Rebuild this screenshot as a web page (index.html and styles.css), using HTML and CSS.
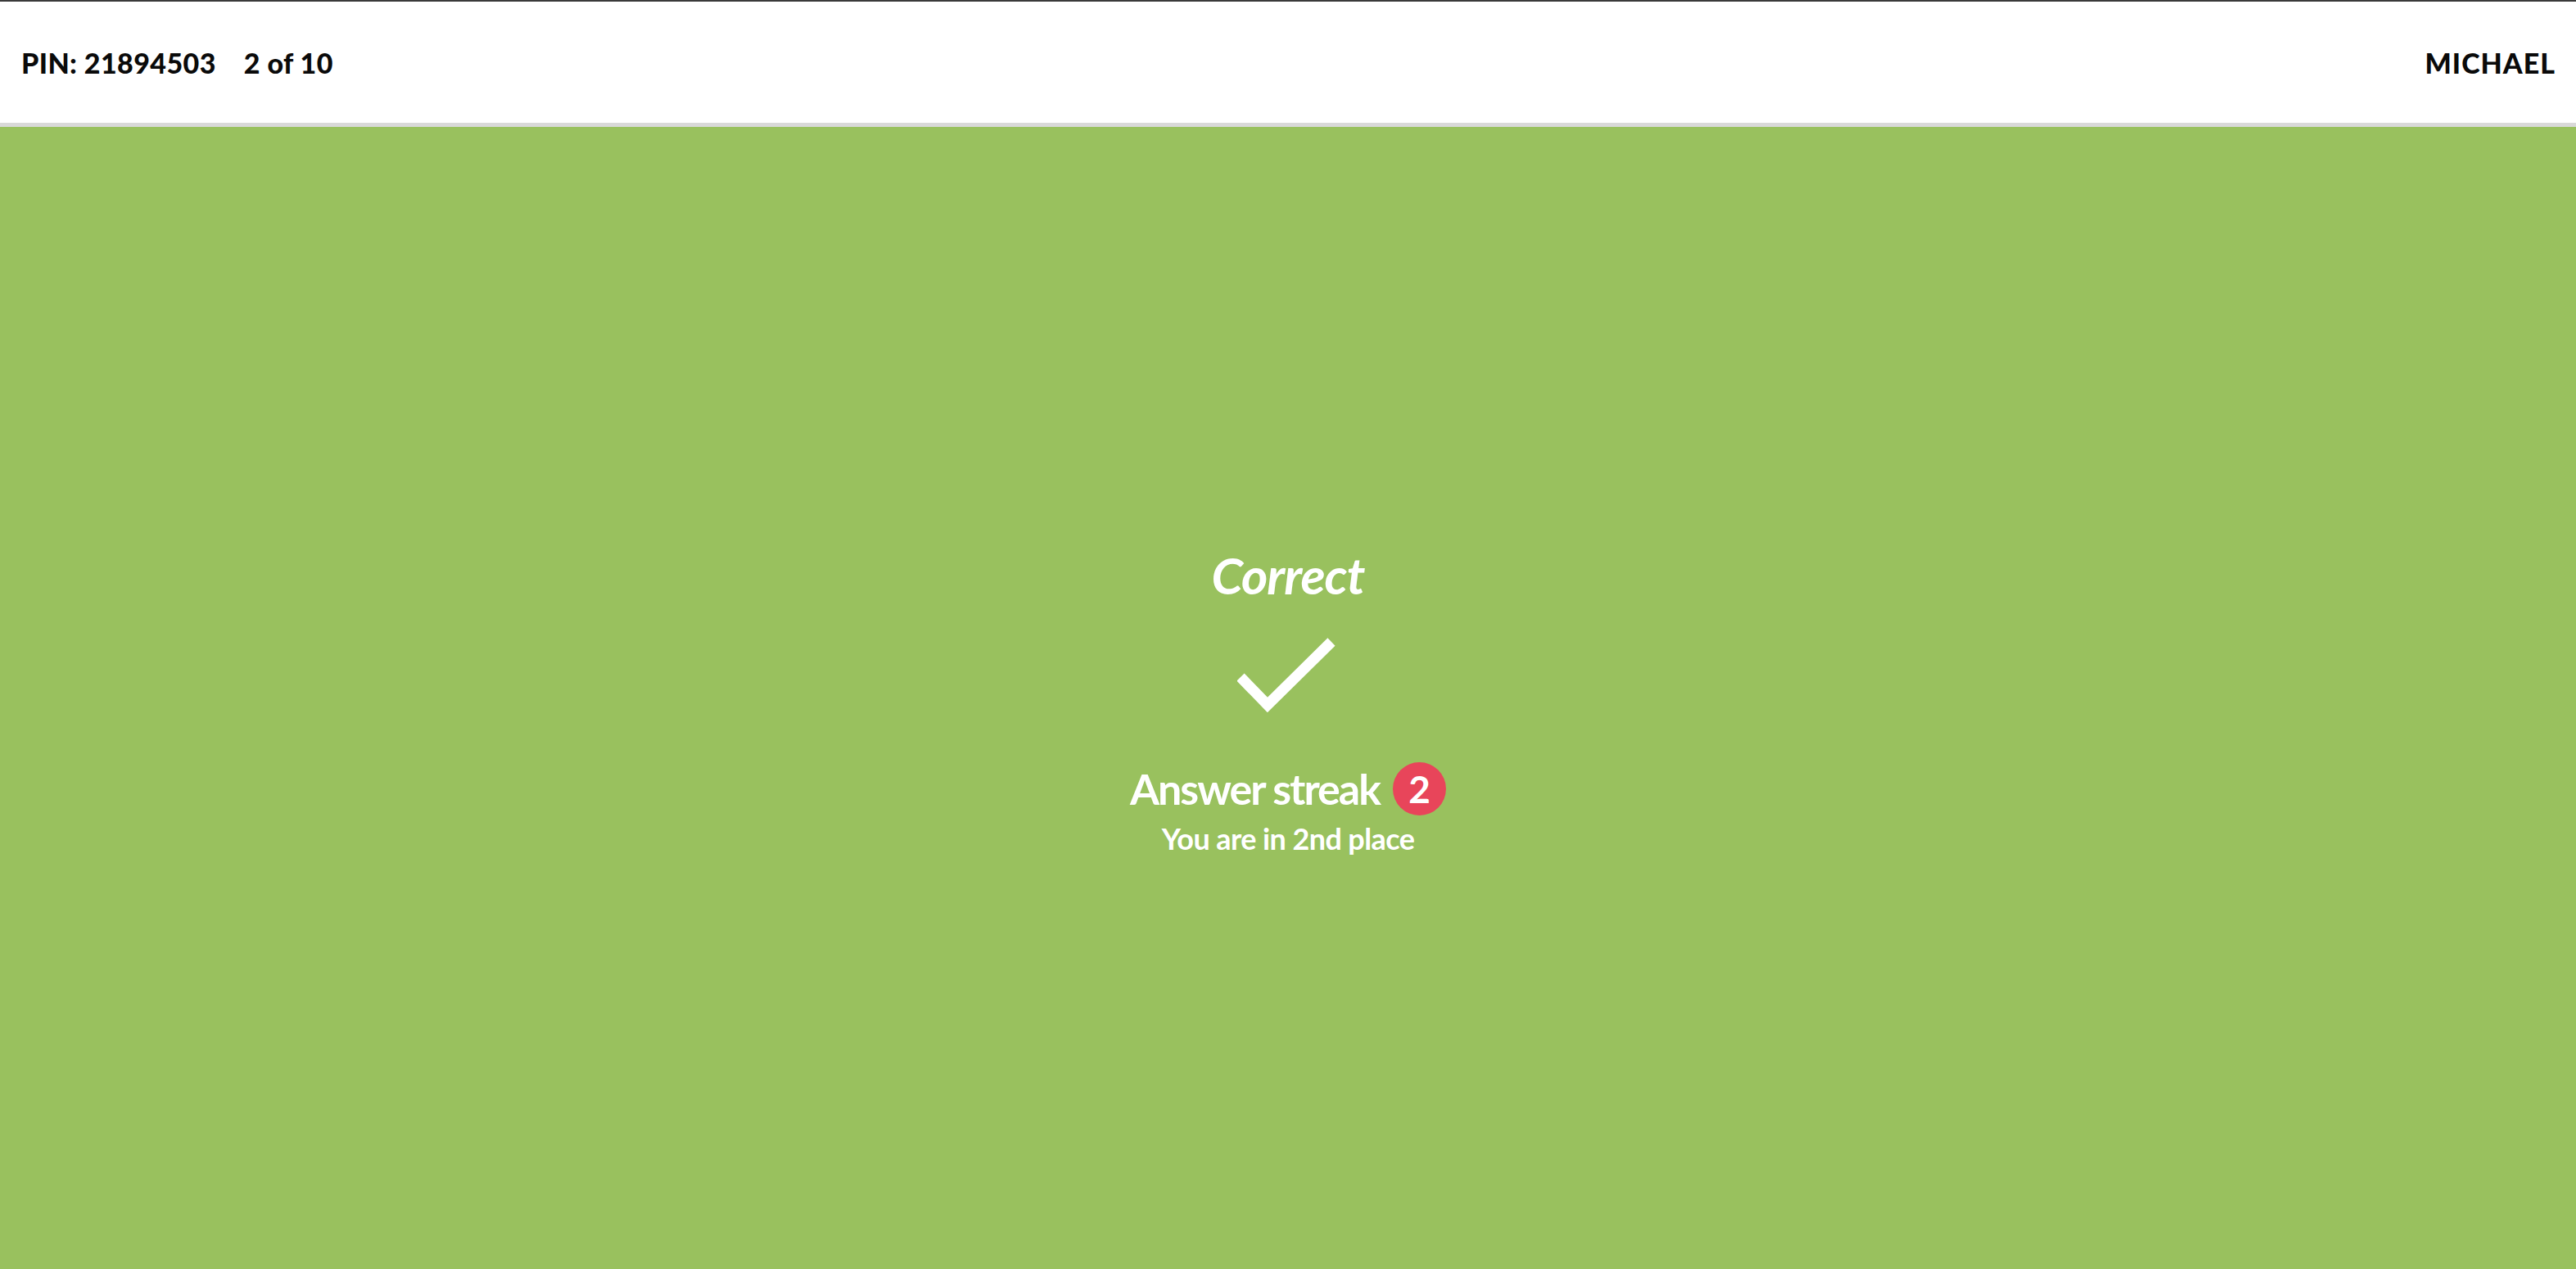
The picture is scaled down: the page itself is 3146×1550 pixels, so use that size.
FILE: index.html
```html
<!DOCTYPE html>
<html lang="en">
<head>
<meta charset="utf-8">
<title>Correct</title>
<link rel="stylesheet" href="styles.css">
</head>
<body>
<div class="page">
  <header class="topbar">
    <div class="topbar-left">
      <span class="pin">PIN: 21894503</span>
      <span class="progress">2 of 10</span>
    </div>
    <div class="player">MICHAEL</div>
  </header>
  <main class="result">
    <div class="result-box">
      <div class="result-title">Correct</div>
      <svg class="check" width="120" height="91" viewBox="0 0 120 91" aria-hidden="true">
        <path d="M4 48 L37 82 L115 5" fill="none" stroke="#fff" stroke-width="13" stroke-linecap="butt" stroke-linejoin="miter"/>
      </svg>
      <div class="streak">
        <span class="streak-label">Answer streak</span>
        <span class="streak-badge">2</span>
      </div>
      <div class="place">You are in 2nd place</div>
    </div>
  </main>
</div>
</body>
</html>
```

FILE: styles.css
```css
html, body {
  margin: 0;
  padding: 0;
  height: 100%;
}
body {
  font-family: Lato, "Open Sans", sans-serif;
  background: #99c15e;
}
.page {
  display: flex;
  flex-direction: column;
  height: 100vh;
}
.topbar {
  flex: 0 0 auto;
  height: 148px;
  background: #fff;
  border-top: 2px solid #3a3a3a;
  border-bottom: 5px solid #d9d9d9;
  display: flex;
  align-items: center;
  justify-content: space-between;
  padding: 0 25px 0 26px;
  font-weight: 900;
  font-size: 34px;
  color: #0a0a0a;
  letter-spacing: 0.4px;
}
.topbar-left {
  display: flex;
  gap: 34px;
}
.player {
  letter-spacing: 1px;
}
.result {
  flex: 1 1 auto;
  display: flex;
  align-items: center;
  justify-content: center;
  color: #fff;
  padding-top: 8px;
}
.result-box {
  display: flex;
  flex-direction: column;
  align-items: center;
}
.result-title {
  font-style: italic;
  font-weight: 700;
  font-size: 62px;
  line-height: 70px;
  letter-spacing: -1px;
}
.check {
  display: block;
  margin-top: 42px;
  margin-left: -4px;
}
.streak {
  display: flex;
  align-items: center;
  gap: 16px;
  margin-top: 60px;
}
.streak-label {
  font-weight: 700;
  font-size: 52px;
  line-height: 66px;
  letter-spacing: -2px;
}
.streak-badge {
  width: 65px;
  height: 65px;
  border-radius: 50%;
  background: #e8455a;
  display: flex;
  align-items: center;
  justify-content: center;
  font-weight: 700;
  font-size: 46px;
}
.place {
  font-weight: 700;
  font-size: 36px;
  line-height: 44px;
  letter-spacing: -0.6px;
  margin-top: 6px;
}
```
